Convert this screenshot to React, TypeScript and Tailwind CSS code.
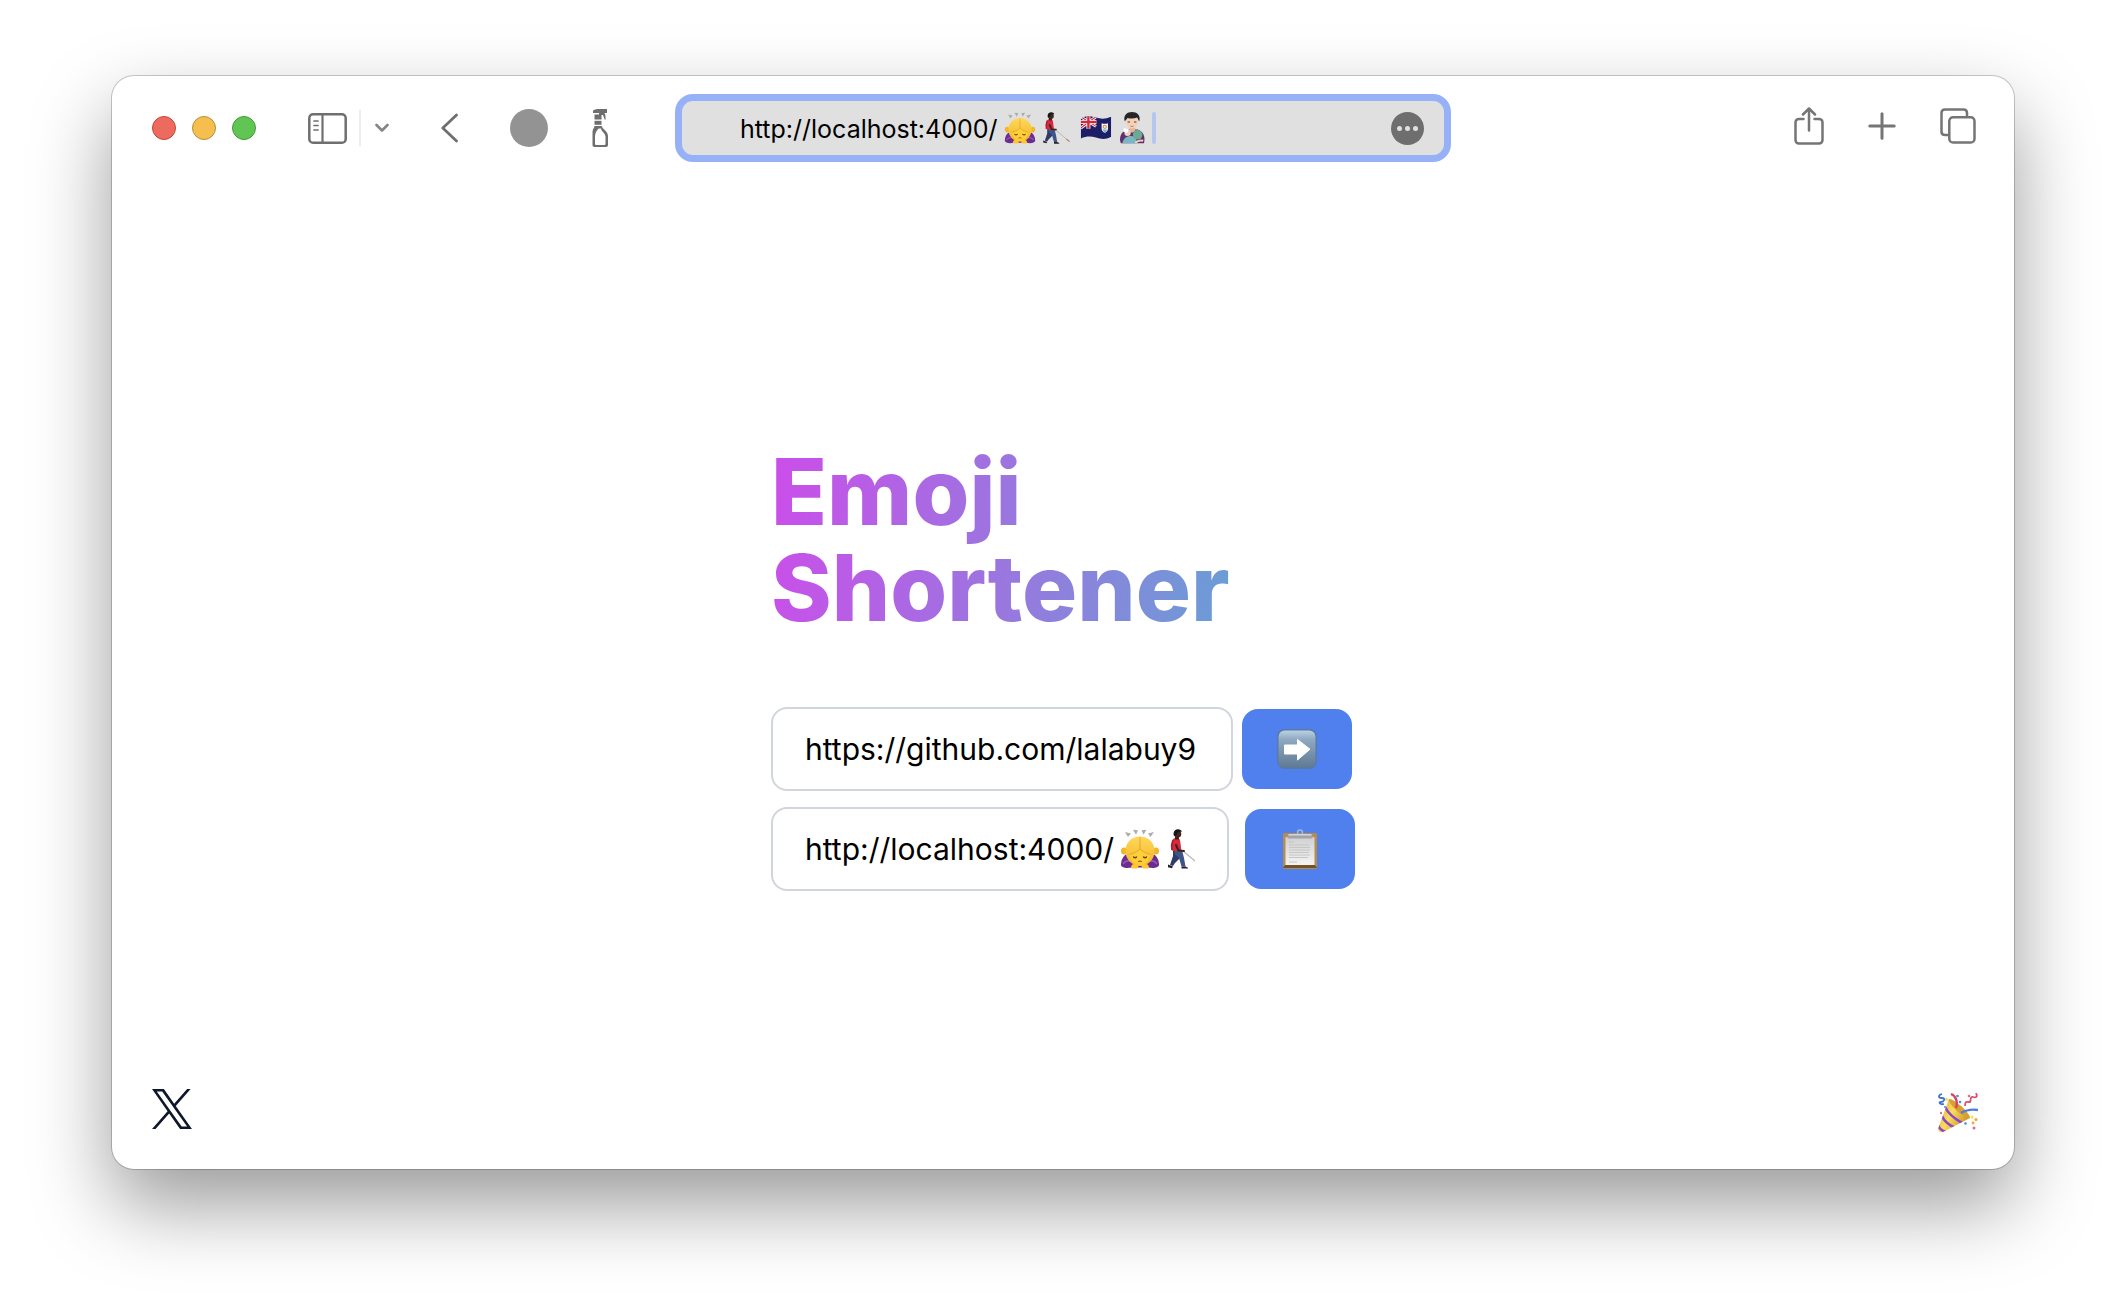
import React from "react";

type IconProps = { className?: string };

function BowingWoman({ className }: IconProps) {
  return (
    <svg viewBox="0 0 40 40" className={className} role="img" aria-label="person bowing">
      <defs>
        <linearGradient id="hair" x1="0" y1="0" x2="0" y2="1">
          <stop offset="0" stopColor="#ffd85c" />
          <stop offset="1" stopColor="#f3b423" />
        </linearGradient>
      </defs>
      <g fill="#adadad">
        <path d="M5 3l6 1.500-3 3.500z" />
        <path d="M13 .8l5 .4-2 4.600z" />
        <path d="M21.500 1.200l5-.4-3 5z" />
        <path d="M28 4.500L34 3l-3.500 5z" />
      </g>
      <path d="M1 36c0-5 2-9 6-11h26c4 2 6 6 6 11-.5 3-6 3.500-11 2.500H12C7 39.500 1.500 39 1 36z" fill="#6a2c91" />
      <path d="M3 35c2-3 5-4 9-3M37 35c-2-3-5-4-9-3" stroke="#9455b8" strokeWidth="1.500" fill="none" />
      <ellipse cx="4" cy="22" rx="3" ry="3.500" fill="#f3b62a" />
      <ellipse cx="36" cy="22" rx="3" ry="3.500" fill="#f3b62a" />
      <path d="M20 7.500C11 7.500 5.500 14 5.500 22c0 8 6 15 14.500 15s14.500-7 14.500-15C34.500 14 29 7.500 20 7.500z" fill="url(#hair)" />
      <path d="M20 20c-3 3-6 4.500-10.500 5.500C11 32 15 36.500 20 36.500S29 32 30.500 25.500C26 24.500 23 23 20 20z" fill="#ffcf3a" />
      <path d="M20 8v12c-3 3-6 4.500-10.500 5.500M20 20c3 3 6 4.500 10.500 5.500" stroke="#dda02a" strokeWidth=".8" fill="none" />
      <path d="M13.500 28c1 .9 2.200.9 3 0M23.500 28c1 .9 2.200.9 3 0" stroke="#6b4310" strokeWidth="1.400" fill="none" strokeLinecap="round" />
      <path d="M18.500 32.500c1-.5 2-.5 3 0" stroke="#9c5a15" strokeWidth="1.100" fill="none" strokeLinecap="round" />
      <path d="M11 38.500c0-3 3-4.500 6-4 2 .5 2 4 0 5h-5zM29 38.500c0-3-3-4.500-6-4-2 .5-2 4 0 5h5z" fill="#ffc62e" />
    </svg>
  );
}

function CaneWalker({ className }: IconProps) {
  return (
    <svg viewBox="0 0 40 40" className={className} role="img" aria-label="man with white cane">
      <path d="M19 22L37.500 37.500" stroke="#b5b5b5" strokeWidth="1.100" />
      <path d="M33 33.800l4 3.300" stroke="#c97b80" strokeWidth="1.400" />
      <path d="M9 21l8 1-1 7-5 5-2 3-3-1 3-9z" fill="#2f3c66" />
      <path d="M10 21h8l2 8 1.500 8.500h-4l-2.500-8.500-4-4z" fill="#3f5488" />
      <path d="M4 35.500l5 2-1 1.700-4-1zM17.500 37.500h4l2.500 1.300v.8h-6.500z" fill="#22222b" />
      <path d="M9 10c3-2 6-1 7 1l1.500 11H8.500L7 17z" fill="#d8283a" />
      <path d="M9 11c-1.500 3.500-1.500 7-1 10" stroke="#a71f31" strokeWidth="1.800" fill="none" />
      <path d="M12 16l2.500 5.500 5.500.5" stroke="#38231f" strokeWidth="2" fill="none" strokeLinecap="round" strokeLinejoin="round" />
      <path d="M11 7h4v3.500h-4z" fill="#38231f" />
      <circle cx="13.700" cy="5" r="3.600" fill="#3f2823" />
      <path d="M9.500 5c0-3 2-4.700 4.500-4.700 2 0 3.700 1 3.700 2.700-3-1-4.600 0-5.400 3.500-1.800 1-2.800.5-2.800-1.500z" fill="#17171a" />
    </svg>
  );
}

function AnguillaFlag({ className }: IconProps) {
  return (
    <svg viewBox="0 0 40 40" className={className} role="img" aria-label="flag of Anguilla">
      <defs>
        <clipPath id="wave">
          <path d="M1 8c7-4 13-3 19-1s12 2 19-1v25c-7 4-13 3-19 1s-12-2-19 1z" />
        </clipPath>
      </defs>
      <g clipPath="url(#wave)">
        <path d="M0 3h40v33H0z" fill="#1c1f66" />
        <path d="M1 6l19 12M20 6L1 20" stroke="#fff" strokeWidth="3.500" />
        <path d="M1 6l19 12M20 6L1 20" stroke="#d22a3c" strokeWidth="1.400" />
        <path d="M10.500 4v17M0 12.500h20.500" stroke="#fff" strokeWidth="5" />
        <path d="M10.500 4v17M0 12.500h20.500" stroke="#d22a3c" strokeWidth="3" />
      </g>
      <path d="M27 14c3 1 5 1 8 0v7c0 3-2 4-4 5-2-1-4-2-4-5z" fill="#f1f3f2" />
      <path d="M28 22h6c-.5 2-2 3-3 3.500-1-.5-2.500-1.500-3-3.500z" fill="#67bcd6" />
      <circle cx="31" cy="18.500" r="2" fill="none" stroke="#e58a32" strokeWidth="1.300" />
    </svg>
  );
}

function FeedingBaby({ className }: IconProps) {
  return (
    <svg viewBox="0 0 40 40" className={className} role="img" aria-label="person feeding baby">
      <path d="M6 39c-3-7 1-15 8-17h13c7 2 10 9 8 17z" fill="#613071" />
      <path d="M17 18h7v6l-4 2-3-2z" fill="#e3b697" />
      <ellipse cx="20" cy="12" rx="7.500" ry="8.500" fill="#f4d2b8" />
      <path d="M11 12C8.500 4 14 0 20 0s11.500 4 9 12c-1-2-1.500-3-2.500-5-4 1.500-8 1.500-12 .5-1 1.500-2.500 2.500-3.500 4.500z" fill="#25262a" />
      <path d="M14.500 12.500h3M22.500 12.500h3" stroke="#4a3329" strokeWidth="1.200" />
      <path d="M18 17.500c1.500.8 2.500.8 4 0" stroke="#b56c58" strokeWidth="1.200" fill="none" />
      <path d="M8 39c1-8 9-11 16-8l3 8z" fill="#79b7c4" />
      <circle cx="27" cy="28.500" r="6" fill="#6bab91" />
      <circle cx="14.500" cy="26" r="4" fill="#f4d2b8" />
      <path d="M10 20l6 2-2 4.500-5-2z" fill="#fff" />
      <path d="M24 38.500c4-3.500 7-3.500 10-2.500" stroke="#f4d2b8" strokeWidth="2.500" fill="none" />
    </svg>
  );
}

function ArrowEmoji() {
  return (
    <svg viewBox="0 0 40 40" className="size-10" aria-hidden="true">
      <defs>
        <linearGradient id="tile" x1="0" y1="0" x2="0" y2="1">
          <stop offset="0" stopColor="#c0d5e5" />
          <stop offset=".25" stopColor="#8ea9c1" />
          <stop offset="1" stopColor="#5f7993" />
        </linearGradient>
      </defs>
      <rect x=".8" y=".8" width="38.400" height="38.400" rx="7" fill="url(#tile)" stroke="#587aa5" strokeWidth="1.400" />
      <path d="M7.500 16h13V10.500L33 20.200 20.500 31V25h-13z" fill="#fff" stroke="#fff" strokeWidth="1" strokeLinejoin="round" />
    </svg>
  );
}

function ClipboardEmoji() {
  return (
    <svg viewBox="0 0 40 40" className="size-10" aria-hidden="true">
      <defs>
        <linearGradient id="paper" x1="0" y1="0" x2="0" y2="1">
          <stop offset="0" stopColor="#d0d0d0" />
          <stop offset="1" stopColor="#f4f4f4" />
        </linearGradient>
      </defs>
      <rect x="3" y="4" width="34" height="36" rx="1.500" fill="#b78b4a" />
      <path d="M5 36h30l2 3H3z" fill="#755223" />
      <rect x="5.500" y="8" width="29" height="28" fill="url(#paper)" />
      <path d="M9 13h5M9 16h20M9 18.500h21M9 21h21M9 23.500h20M9 26h21M9 28.500h19M9 33h8" stroke="#c2c2c2" strokeWidth=".9" />
      <circle cx="20" cy="3.500" r="2.500" fill="none" stroke="#9fb6d5" strokeWidth="1.500" />
      <path d="M9 5h22l2 3-1 1.500H8L7 8z" fill="#a3a3aa" />
      <path d="M9 5h22l1 1.500H8z" fill="#d4d4da" />
    </svg>
  );
}

function PartyPopper() {
  return (
    <svg viewBox="0 0 40 40" className="size-10" aria-hidden="true">
      <defs>
        <linearGradient id="cone" x1="0" y1="0" x2="1" y2=".6">
          <stop offset="0" stopColor="#d9a331" />
          <stop offset=".5" stopColor="#f9dd5b" />
          <stop offset="1" stopColor="#c98f26" />
        </linearGradient>
        <clipPath id="coneClip">
          <path d="M11 6C16 8 28 18 32 25L5 39c-3 1-5-1-5-3z" />
        </clipPath>
      </defs>
      <path d="M11 6C16 8 28 18 32 25L5 39c-3 1-5-1-5-3z" fill="url(#cone)" />
      <g clipPath="url(#coneClip)" stroke="#8c47c9" strokeWidth="2.600" fill="none">
        <path d="M7 14c3 6 10 12 17 16" />
        <path d="M4 23c2 5 7 9 13 12" />
        <path d="M0 32c1 3 4 6 8 7" />
      </g>
      <path d="M11 6c4-1 21 13 21 19-4 0-10-4-14-8S10 8 11 6z" fill="#d6a035" />
      <path d="M18 15c2-6 0-12-5-14" stroke="#d94460" strokeWidth="2.400" fill="none" />
      <path d="M23 20c5-3 10-4 17-3" stroke="#4a7fdc" strokeWidth="2.400" fill="none" />
      <path d="M4 1c-4 1-4 4 0 4s2 4-1 4-1 3 3 2" stroke="#4272cf" strokeWidth="1.800" fill="none" />
      <path d="M38 0c2 4 0 5-3 4s-2 4-3 5-5-3-5 4" stroke="#d9506f" strokeWidth="1.800" fill="none" />
      <g fill="#5584dc">
        <circle cx="19.500" cy="3" r="1.300" />
        <circle cx="22" cy="9" r="1.300" />
        <circle cx="27.500" cy="30.500" r="1.300" />
        <circle cx="7" cy="14" r="1" />
      </g>
      <g fill="#e06a90">
        <circle cx="31" cy="3" r="1.300" />
        <circle cx="3" cy="20" r="1.200" />
        <circle cx="36" cy="35" r="1.500" />
      </g>
      <g fill="#f2a53a">
        <circle cx="38" cy="26.500" r="1.500" />
        <circle cx="35" cy="30" r="1.400" />
      </g>
      <circle cx="34" cy="24" r="1.500" fill="#f7e04b" />
      <circle cx="8.500" cy="6.500" r="1.400" fill="#f7d84b" />
    </svg>
  );
}

function SidebarIcon() {
  return (
    <svg viewBox="0 0 39 31" className="h-[31px] w-[39px]" fill="none" stroke="#6f6f6f" aria-hidden="true">
      <rect x="1.300" y="1.300" width="36.400" height="28.400" rx="3.800" strokeWidth="2.500" />
      <path d="M14.500 1v29" strokeWidth="2.200" />
      <path d="M6 8h4M6 12.500h4M6 17h4" strokeWidth="1.700" strokeLinecap="round" />
    </svg>
  );
}

function SprayIcon() {
  return (
    <svg viewBox="0 0 16 38" className="h-[38px] w-4" fill="#6f6f6f" aria-hidden="true">
      <path d="M1 1.500C3 .3 5 0 7 0h8v4h-2.500l.8 2 .4 4.500-1-.1L11 6H9.500v4.500H2.500V5.500H7V4H1z" />
      <path d="M2.500 11.800h7v4h-7z" />
      <path
        fillRule="evenodd"
        d="M2.500 17h7.200c.5 3 6.300 5 6.300 10v9c0 1.300-.7 2-2 2H2.500C1.200 38 .5 37.300.5 36V23c0-2.500 1.700-4 2-6zM7 19.500c-2 1-4 5-4 8.500v6.500c0 1 .5 1.500 1.500 1.500h7.500c1 0 1.500-.5 1.500-1.500V28c0-4-4-5-4.500-8.500z"
      />
    </svg>
  );
}

function ShareIcon() {
  return (
    <svg viewBox="0 0 30 38" className="h-[38px] w-[30px]" fill="none" stroke="#757575" strokeWidth="2.500" strokeLinecap="round" strokeLinejoin="round" aria-hidden="true">
      <path d="M9.500 12H5c-2 0-3.500 1.500-3.500 3.500v17.500c0 2 1.500 3.500 3.500 3.500h20c2 0 3.500-1.500 3.500-3.500V15.500c0-2-1.500-3.500-3.500-3.500h-4.500" />
      <path d="M15 23.500V1.500M9 7.500l6-6 6 6" />
    </svg>
  );
}

function TabsIcon() {
  return (
    <svg viewBox="0 0 36 36" className="size-9" fill="none" stroke="#757575" strokeWidth="2.500" aria-hidden="true">
      <path d="M27 9V5c0-2.200-1.300-3.500-3.500-3.500H5C2.800 1.500 1.500 2.800 1.500 5v18.500C1.500 25.700 2.800 27 5 27h4" />
      <rect x="9.300" y="9.300" width="25.200" height="25.200" rx="3.800" />
    </svg>
  );
}

function XLogo() {
  return (
    <svg viewBox="0 0 24 24" className="size-10" fill="#0f172a" aria-hidden="true">
      <path d="M14.258 10.152L23.176 0h-2.113l-7.747 8.813L7.133 0H0l9.352 13.328L0 23.973h2.113l8.176-9.309 6.531 9.309h7.133zm-2.895 3.293l-.949-1.328L2.875 1.560h3.246l6.086 8.523.945 1.328 7.910 11.078h-3.246z" />
    </svg>
  );
}

function Toolbar() {
  return (
    <header className="grid grid-cols-[minmax(0,1fr)_minmax(0,776px)_minmax(0,1fr)] items-center pt-[18px]">
      <div className="flex items-center pl-10">
        <div className="flex gap-4">
          <button aria-label="Close" className="size-6 rounded-full border border-[#c9453d] bg-[#ec6a5e]" />
          <button aria-label="Minimize" className="size-6 rounded-full border border-[#b98f3d] bg-[#f4bf4f]" />
          <button aria-label="Zoom" className="size-6 rounded-full border border-[#479a3c] bg-[#61c554]" />
        </div>
        <button aria-label="Toggle sidebar" className="ml-13">
          <SidebarIcon />
        </button>
        <div className="ml-3 h-9 w-0.5 bg-[#ededed]" />
        <button aria-label="Tab groups" className="ml-3.5">
          <svg viewBox="0 0 14 10" className="h-2.5 w-3.5" fill="none" stroke="#858585" strokeWidth="2.600" strokeLinecap="round" strokeLinejoin="round">
            <path d="M1.500 2L7 7.500 12.500 2" />
          </svg>
        </button>
        <button aria-label="Back" className="ml-13">
          <svg viewBox="0 0 17 30" className="h-[30px] w-[17px]" fill="none" stroke="#6f6f6f" strokeWidth="2.800" strokeLinecap="round" strokeLinejoin="round">
            <path d="M15.500 2L1.800 15l13.700 13" />
          </svg>
        </button>
        <button aria-label="Profile" className="ml-13 size-[38px] rounded-full bg-[#939393]" />
        <button aria-label="Clean page" className="ml-11">
          <SprayIcon />
        </button>
      </div>

      <div className="flex h-[68px] items-center rounded-[18px] border-7 border-[#96b1f6] bg-[#e0e0e0] pr-5 pl-[58px]">
        <input
          aria-label="Address"
          readOnly
          defaultValue="http://localhost:4000/"
          className="field-sizing-content min-w-0 bg-transparent pt-0.5 text-[25px] leading-8 text-black outline-none"
        />
        <BowingWoman className="ml-1.5 size-8 shrink-0" />
        <CaneWalker className="ml-1 size-8 shrink-0" />
        <AnguillaFlag className="ml-2 size-8 shrink-0" />
        <FeedingBaby className="ml-1 size-8 shrink-0" />
        <div className="ml-1 h-8 w-1 shrink-0 rounded-sm bg-[#b3c7ef]" />
        <button aria-label="Page menu" className="ml-auto flex size-[33px] shrink-0 items-center justify-center gap-[3px] rounded-full bg-[#6e6e6e]">
          <span className="size-[5px] rounded-full bg-[#e0e0e0]" />
          <span className="size-[5px] rounded-full bg-[#e0e0e0]" />
          <span className="size-[5px] rounded-full bg-[#e0e0e0]" />
        </button>
      </div>

      <div className="-mt-1 flex items-center justify-end gap-11 pr-[38px]">
        <button aria-label="Share">
          <ShareIcon />
        </button>
        <button aria-label="New tab">
          <svg viewBox="0 0 28 28" className="size-7" fill="none" stroke="#757575" strokeWidth="3" strokeLinecap="round">
            <path d="M14 1.800v24.400M1.800 14h24.400" />
          </svg>
        </button>
        <button aria-label="Tab overview">
          <TabsIcon />
        </button>
      </div>
    </header>
  );
}

export default function App() {
  return (
    <div className="min-h-screen bg-white px-28 pt-[76px] pb-[147px] font-['Inter',sans-serif]">
      <div className="flex min-h-[1093px] flex-col rounded-[22px] bg-white shadow-[0_0_0_1px_rgba(0,0,0,0.2),0_36px_80px_rgba(0,0,0,0.4)]">
        <Toolbar />
        <main className="mx-auto flex w-[584px] grow flex-col pt-[282px]">
          <h1 className="w-fit bg-linear-[98deg,#cc4dea,#6a9ed5] bg-clip-text text-[92px] leading-24 font-extrabold text-transparent">
            Emoji
            <br />
            Shortener
          </h1>
          <form className="mt-[71px] flex flex-col gap-4" onSubmit={(e) => e.preventDefault()}>
            <div className="flex items-center gap-[9px]">
              <div className="w-[462px] rounded-2xl border-2 border-gray-300 px-8 py-5">
                <input
                  aria-label="URL to shorten"
                  defaultValue="https://github.com/lalabuy9"
                  className="block w-full bg-transparent text-[30px] leading-10 text-black outline-none"
                />
              </div>
              <button aria-label="Shorten" className="flex h-20 w-[110px] items-center justify-center rounded-2xl bg-[#4f80ee]">
                <ArrowEmoji />
              </button>
            </div>
            <div className="flex items-center gap-4">
              <div className="w-[458px] rounded-2xl border-2 border-gray-300 px-8 py-5">
                <div className="flex items-center overflow-hidden">
                  <input
                    aria-label="Short URL"
                    readOnly
                    defaultValue="http://localhost:4000/"
                    className="field-sizing-content shrink-0 bg-transparent text-[30px] leading-10 text-black outline-none"
                  />
                  <BowingWoman className="ml-1.5 size-10 shrink-0" />
                  <CaneWalker className="ml-1 size-10 shrink-0" />
                </div>
              </div>
              <button aria-label="Copy" className="flex h-20 w-[110px] items-center justify-center rounded-2xl bg-[#4f80ee]">
                <ClipboardEmoji />
              </button>
            </div>
          </form>
        </main>
        <footer className="flex items-end justify-between px-9 pb-9">
          <a href="#x" aria-label="X profile" className="ml-1 pb-1">
            <XLogo />
          </a>
          <button aria-label="Celebrate">
            <PartyPopper />
          </button>
        </footer>
      </div>
    </div>
  );
}
